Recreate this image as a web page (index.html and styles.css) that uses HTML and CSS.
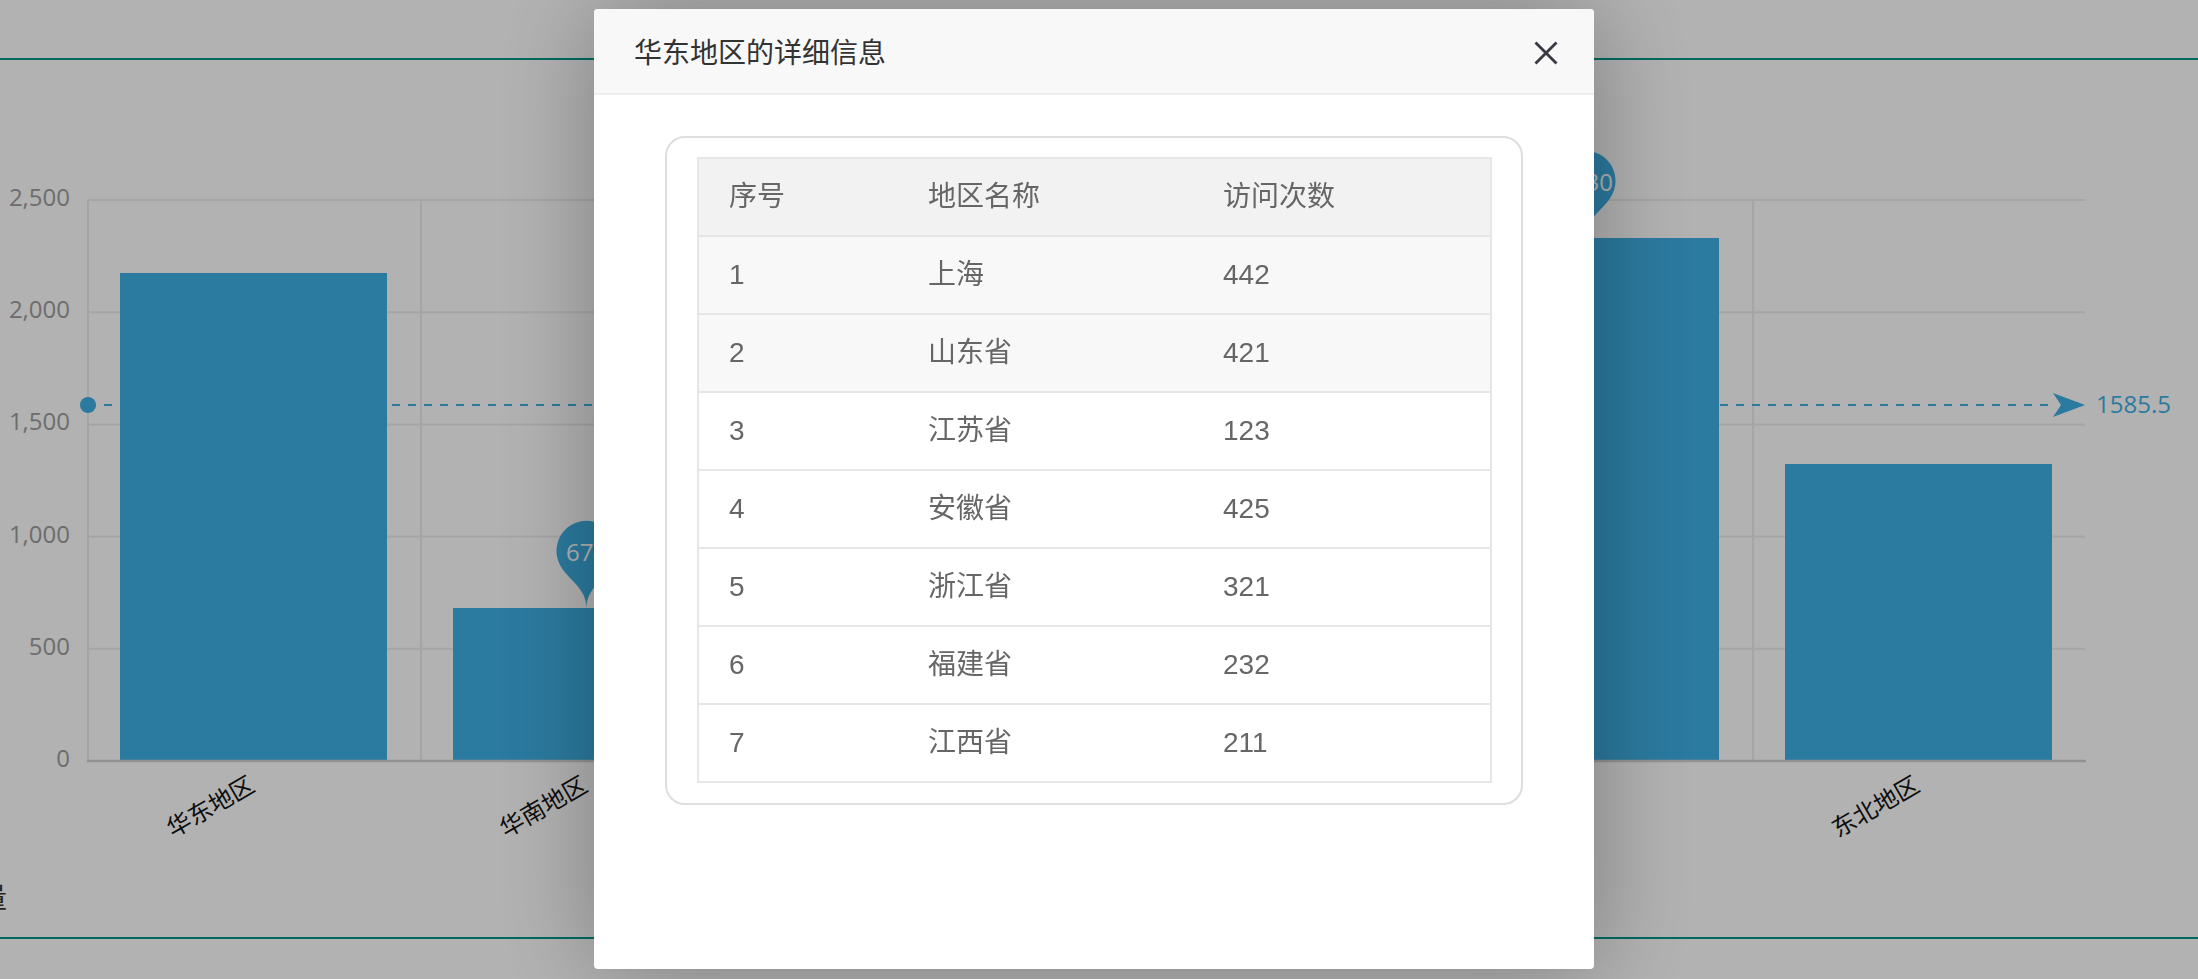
FILE: index.html
```html
<!DOCTYPE html>
<html lang="zh-CN">
<head>
<meta charset="utf-8">
<title>地区访问统计</title>
<link rel="stylesheet" href="styles.css">
</head>
<body>
<div class="page">
  <div class="rule"></div>
  <svg class="chart" width="2198" height="820" viewBox="0 60 2198 820" xmlns="http://www.w3.org/2000/svg">
    <g class="grid">
      <line x1="88" y1="200" x2="2085" y2="200"/>
      <line x1="88" y1="312.2" x2="2085" y2="312.2"/>
      <line x1="88" y1="424.4" x2="2085" y2="424.4"/>
      <line x1="88" y1="536.6" x2="2085" y2="536.6"/>
      <line x1="88" y1="648.8" x2="2085" y2="648.8"/>
      <line x1="88" y1="200" x2="88" y2="761"/>
      <line x1="421" y1="200" x2="421" y2="761"/>
      <line x1="754" y1="200" x2="754" y2="761"/>
      <line x1="1087" y1="200" x2="1087" y2="761"/>
      <line x1="1420" y1="200" x2="1420" y2="761"/>
      <line x1="1753" y1="200" x2="1753" y2="761"/>
    </g>
    <g class="ylabels">
      <text x="70" y="196">2,500</text>
      <text x="70" y="308">2,000</text>
      <text x="70" y="420">1,500</text>
      <text x="70" y="533">1,000</text>
      <text x="70" y="645">500</text>
      <text x="70" y="757">0</text>
    </g>
    <g class="bars">
      <rect x="120" y="273" width="267" height="488"/>
      <rect x="453" y="608" width="267" height="153"/>
      <rect x="786" y="420" width="267" height="341"/>
      <rect x="1119" y="500" width="267" height="261"/>
      <rect x="1452" y="238" width="267" height="523"/>
      <rect x="1785" y="464" width="267" height="297"/>
    </g>
    <line class="xaxis" x1="87" y1="761" x2="2086" y2="761"/>
    <g class="markline">
      <line x1="88" y1="405" x2="2054" y2="405"/>
      <circle cx="88" cy="405" r="8"/>
      <polygon points="2085,405 2053,393 2061,405 2053,417"/>
      <text x="2096" y="403">1585.5</text>
    </g>
    <g class="pin" transform="translate(586.5 608)">
      <path d="M-27.1 -44.28 A30 30 0 1 1 27.1 -44.28 C19.38 -28.02 0 -21 0 0 C0 -21 -19.38 -28.02 -27.1 -44.28 Z"/>
      <text x="0" y="-57">674</text>
    </g>
    <g class="pin" transform="translate(1585.5 238)">
      <path d="M-27.1 -44.28 A30 30 0 1 1 27.1 -44.28 C19.38 -28.02 0 -21 0 0 C0 -21 -19.38 -28.02 -27.1 -44.28 Z"/>
      <text x="0" y="-57">2330</text>
    </g>
    <g class="xlabels">
      <text transform="translate(251 781) rotate(-30)">华东地区</text>
      <text transform="translate(584 781) rotate(-30)">华南地区</text>
      <text transform="translate(917 781) rotate(-30)">华中地区</text>
      <text transform="translate(1250 781) rotate(-30)">华北地区</text>
      <text transform="translate(1583 781) rotate(-30)">西南地区</text>
      <text transform="translate(1916 781) rotate(-30)">东北地区</text>
    </g>
  </svg>
  <div class="note">量</div>
  <div class="rule"></div>
</div>

<div class="shade"></div>

<div class="layer">
  <div class="layer-title">
    <span>华东地区的详细信息</span>
    <svg class="close" width="24" height="24" viewBox="0 0 24 24" xmlns="http://www.w3.org/2000/svg">
      <line x1="1.5" y1="1.5" x2="22.5" y2="22.5"/>
      <line x1="22.5" y1="1.5" x2="1.5" y2="22.5"/>
    </svg>
  </div>
  <div class="layer-content">
    <div class="field">
      <table class="data">
        <colgroup>
          <col class="c1">
          <col class="c2">
          <col class="c3">
        </colgroup>
        <thead>
          <tr><th>序号</th><th>地区名称</th><th>访问次数</th></tr>
        </thead>
        <tbody>
          <tr class="hl"><td>1</td><td>上海</td><td>442</td></tr>
          <tr class="hl"><td>2</td><td>山东省</td><td>421</td></tr>
          <tr><td>3</td><td>江苏省</td><td>123</td></tr>
          <tr><td>4</td><td>安徽省</td><td>425</td></tr>
          <tr><td>5</td><td>浙江省</td><td>321</td></tr>
          <tr><td>6</td><td>福建省</td><td>232</td></tr>
          <tr><td>7</td><td>江西省</td><td>211</td></tr>
        </tbody>
      </table>
    </div>
  </div>
</div>
</body>
</html>
```

FILE: styles.css
```css
* { box-sizing: border-box; }
html, body { margin: 0; padding: 0; }
body {
  width: 2198px;
  height: 979px;
  overflow: hidden;
  background: #fff;
  font-family: "Liberation Sans", "Noto Sans CJK SC", sans-serif;
}

.page { padding-top: 58px; }
.rule { height: 2px; background: #009688; }
.chart { display: block; }

.grid line { stroke: #ededed; stroke-width: 2; }
.xaxis { stroke: #d2d2d2; stroke-width: 2.5; }
.bars rect { fill: #3eafe4; }

.ylabels text {
  font-family: "Open Sans", "Noto Sans CJK SC", sans-serif;
  font-size: 24px;
  fill: #9c9c9c;
  text-anchor: end;
  dominant-baseline: central;
}
.xlabels text {
  font-family: "Noto Sans CJK SC", sans-serif;
  font-size: 24px;
  fill: #141414;
  text-anchor: end;
  dominant-baseline: central;
}
.markline line { stroke: #3eafe4; stroke-width: 2; stroke-dasharray: 8 8; }
.markline circle, .markline polygon { fill: #3eafe4; }
.markline text {
  font-family: "Open Sans", sans-serif;
  font-size: 24px;
  fill: #3eafe4;
  dominant-baseline: central;
}
.pin path { fill: #3eafe4; }
.pin text {
  font-family: "Open Sans", sans-serif;
  font-size: 24px;
  fill: #fff;
  text-anchor: middle;
  dominant-baseline: central;
}

.note {
  height: 57px;
  margin-left: -21px;
  font-family: "Noto Sans CJK SC", sans-serif;
  font-size: 28px;
  line-height: 32px;
  color: #333;
}

.shade {
  position: fixed;
  inset: 0;
  background: rgba(0, 0, 0, 0.3);
}

.layer {
  position: fixed;
  left: 594px;
  top: 9px;
  width: 1000px;
  height: 960px;
  background: #fff;
  border-radius: 4px;
  box-shadow: 2px 2px 100px rgba(0, 0, 0, 0.3);
  overflow: hidden;
}
.layer-title {
  height: 86px;
  border-bottom: 2px solid #eee;
  background: #f8f8f8;
  display: flex;
  align-items: center;
  justify-content: space-between;
  padding: 0 36px 0 40px;
  font-family: "Noto Sans CJK SC", sans-serif;
  font-size: 28px;
  color: #333;
}
.close { margin-top: 4px; }
.close line { stroke: #3a3a44; stroke-width: 2.8; stroke-linecap: butt; }

.layer-content { padding: 41px 71px 0; }
.field {
  border: 2px solid #dedede;
  border-radius: 20px;
  padding: 19px 29px 20px 30px;
}
.data {
  width: 100%;
  border-collapse: collapse;
  table-layout: fixed;
  border: 2px solid #e6e6e6;
}
.c1 { width: 200px; }
.c2 { width: 295px; }
.data th, .data td {
  border-top: 2px solid #e6e6e6;
  border-bottom: 2px solid #e6e6e6;
  border-left: none;
  border-right: none;
  padding: 18px 30px;
  line-height: 40px;
  font-size: 28px;
  color: #666;
  text-align: left;
  font-weight: normal;
}
.data th:first-child, .data td:first-child { border-left: 2px solid #e6e6e6; }
.data th:last-child, .data td:last-child { border-right: 2px solid #e6e6e6; }
.data th { background: #f2f2f2; }
.data tr.hl td { background: #f8f8f8; }
```
